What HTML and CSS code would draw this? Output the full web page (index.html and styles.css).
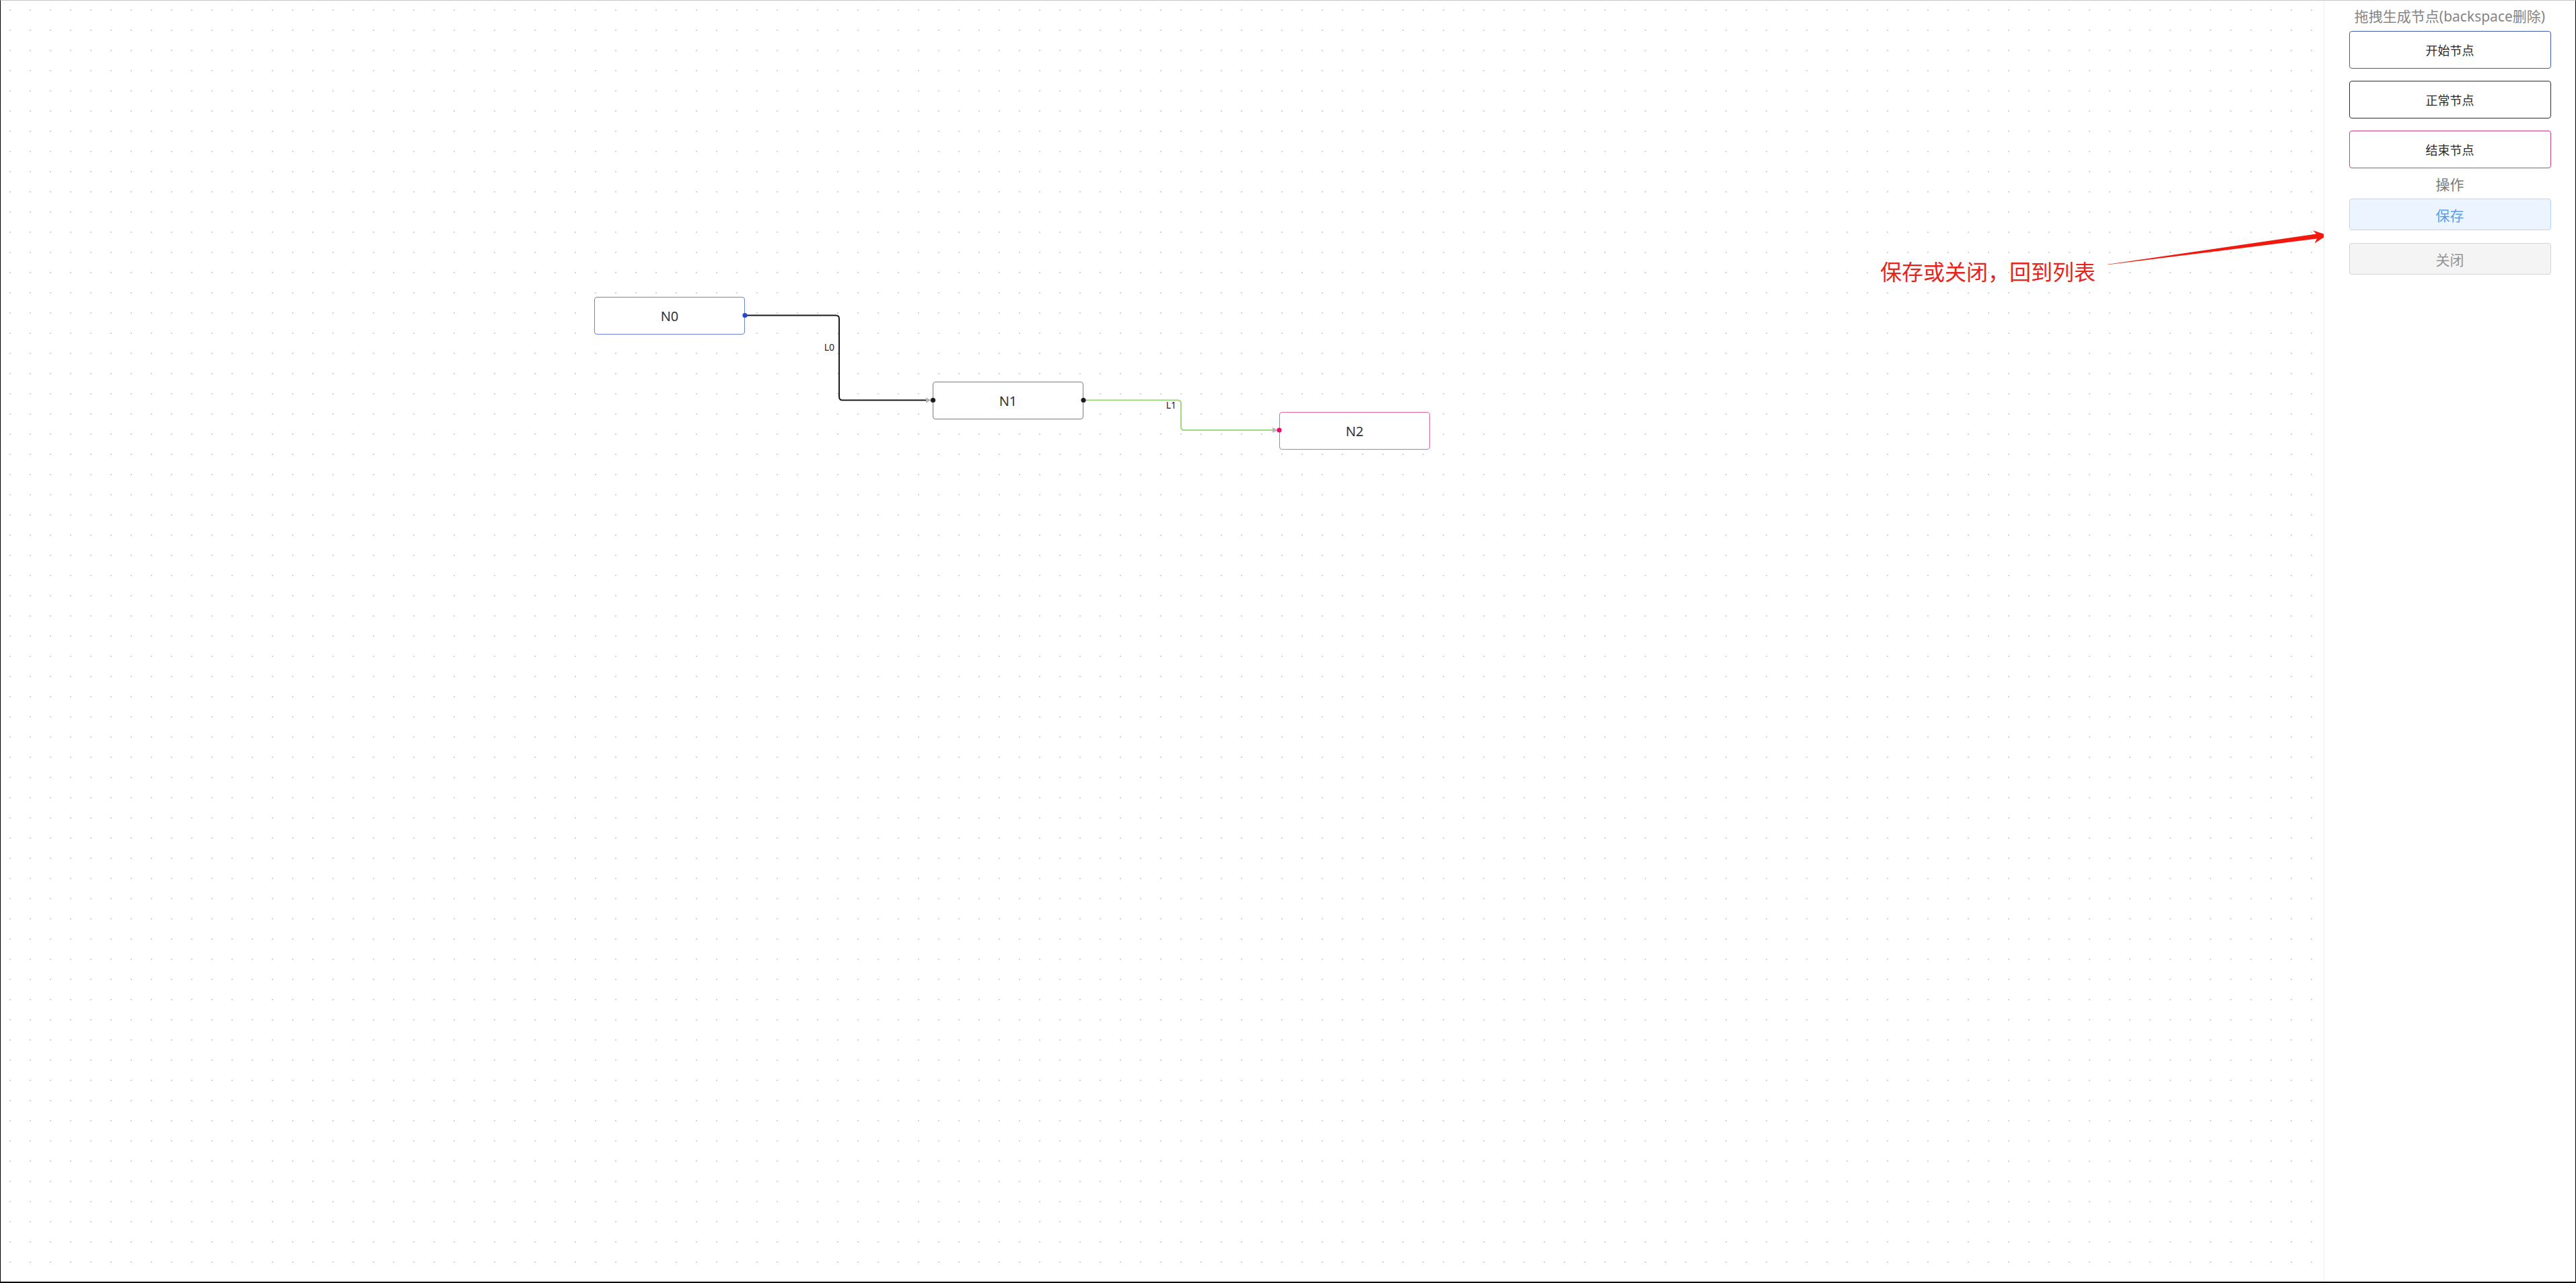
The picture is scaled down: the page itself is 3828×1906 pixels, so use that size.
FILE: index.html
```html
<!DOCTYPE html>
<html lang="zh-CN">
<head>
<meta charset="utf-8">
<title>流程编辑</title>
<link rel="stylesheet" href="styles.css">
</head>
<body>
<div class="app">
  <div class="canvas">
    <svg class="edges" width="3452" height="1903" viewBox="1 1 3452 1903" xmlns="http://www.w3.org/2000/svg">
      <!-- L0 -->
      <path class="edge edge-l0" d="M1107 468.5 H1242 Q1247 468.5 1247 473.5 V589.5 Q1247 594.5 1252 594.5 H1378"/>
      <polygon class="edge-arrow" points="1384,594.5 1376,590.5 1376,598.5"/>
      <text class="edge-label" x="1240" y="521" text-anchor="end">L0</text>
      <!-- L1 -->
      <path class="edge edge-l1" d="M1610 594.5 H1750 Q1755 594.5 1755 599.5 V634 Q1755 639 1760 639 H1893"/>
      <polygon class="edge-arrow" points="1899,639 1891,635 1891,643"/>
      <text class="edge-label" x="1748" y="607" text-anchor="end">L1</text>
      <!-- ports -->
      <circle class="port port-start" cx="1107" cy="468.5" r="3.6"/>
      <circle class="port port-normal" cx="1386.5" cy="594.5" r="3.6"/>
      <circle class="port port-normal" cx="1610" cy="594.5" r="3.6"/>
      <circle class="port port-end" cx="1901" cy="639" r="3.6"/>
      <!-- annotation -->
      <text class="note-text" x="2794" y="416">保存或关闭，回到列表</text>
      <polygon class="note-arrow" points="3132,393.3 3132.2,392.7 3442,347.6 3437,342.3 3458.3,349.3 3439.5,361.4 3443,354.6"/>
    </svg>
    <div class="node node-start" style="left:882px; top:440px;">N0</div>
    <div class="node node-normal" style="left:1385px; top:566px;">N1</div>
    <div class="node node-end" style="left:1900px; top:611px;">N2</div>
  </div>
  <aside class="panel">
    <div class="panel-title">拖拽生成节点(backspace删除)</div>
    <div class="tool-btn tool-start">开始节点</div>
    <div class="tool-btn tool-normal">正常节点</div>
    <div class="tool-btn tool-end">结束节点</div>
    <div class="panel-sub">操作</div>
    <div class="act-btn act-save">保存</div>
    <div class="act-btn act-close">关闭</div>
  </aside>
</div>
</body>
</html>
```
FILE: styles.css
```css
html, body {
  margin: 0;
  padding: 0;
  background: #fff;
}

body {
  font-family: "Noto Sans", "Noto Sans CJK SC", sans-serif;
  color: #333;
}

.app {
  box-sizing: border-box;
  width: 3828px;
  height: 1906px;
  display: flex;
  border: 1px solid #000;
  border-top-color: #c8c8c8;
  border-bottom-width: 2px;
}

.canvas {
  position: relative;
  flex: 1;
  overflow: hidden;
  background-color: #fff;
  background-image: radial-gradient(circle at center, #cfcfcf 0, #d6d6d6 1px, rgba(255,255,255,0) 1.6px);
  background-size: 30px 30px;
  background-position: -1px -1px;
}

.edges {
  position: absolute;
  left: 0;
  top: 0;
  z-index: 2;
  overflow: visible;
}

.edge {
  fill: none;
  stroke-linejoin: round;
}

.edge-l0 {
  stroke: #1c1820;
  stroke-width: 2;
}

.edge-l1 {
  stroke: #9fd884;
  stroke-width: 2;
}

.edge-arrow {
  fill: #b4b4b8;
}

.edge-label {
  font-family: "Noto Sans", sans-serif;
  font-size: 14px;
  fill: #222;
}

.port-start { fill: #2549c9; }
.port-normal { fill: #1c1a26; }
.port-end { fill: #ea0f69; }

.note-text {
  font-family: "Noto Sans CJK SC", "Noto Sans", sans-serif;
  font-size: 32px;
  fill: #e6241c;
}

.note-arrow {
  fill: #f3180e;
}

.node {
  position: absolute;
  z-index: 1;
  box-sizing: border-box;
  width: 224px;
  height: 56px;
  border: 1.5px solid #888;
  border-radius: 4px;
  background: #fff;
  display: flex;
  align-items: center;
  justify-content: center;
  font-size: 20px;
  color: #333;
}

.node-start { border-color: #6a82d6; }
.node-normal { border-color: #7c7c80; }
.node-end { border-color: #e2679f; }

.panel {
  box-sizing: border-box;
  width: 374px;
  flex: none;
  border-left: 1px solid #f0f0f0;
  background: #fff;
  display: flex;
  flex-direction: column;
  align-items: center;
  padding-top: 9px;
}

.panel-title {
  font-size: 21px;
  line-height: 28px;
  color: #858585;
  margin-bottom: 8px;
  white-space: nowrap;
}

.tool-btn {
  box-sizing: border-box;
  width: 300px;
  height: 56px;
  border: 1px solid #333;
  border-radius: 4px;
  display: flex;
  align-items: center;
  justify-content: center;
  font-size: 18px;
  color: #2a2a2a;
  margin-bottom: 18px;
  background: #fff;
}

.tool-start { border-color: #3f5cad; }
.tool-normal { border-color: #2e2e2e; }
.tool-end { border-color: #cc3d7f; margin-bottom: 0; }

.panel-sub {
  margin-top: 10px;
  font-size: 21px;
  line-height: 28px;
  color: #7a7a7a;
  margin-bottom: 7px;
}

.act-btn {
  box-sizing: border-box;
  width: 300px;
  height: 47px;
  border: 1px solid #ccc;
  border-radius: 4px;
  display: flex;
  align-items: center;
  justify-content: center;
  font-size: 21px;
  margin-bottom: 19px;
}

.act-save {
  background: #ecf5ff;
  border-color: #b3d8ff;
  color: #5b9ef0;
}

.act-close {
  background: #f4f4f5;
  border-color: #d3d4d6;
  color: #909399;
}
```
